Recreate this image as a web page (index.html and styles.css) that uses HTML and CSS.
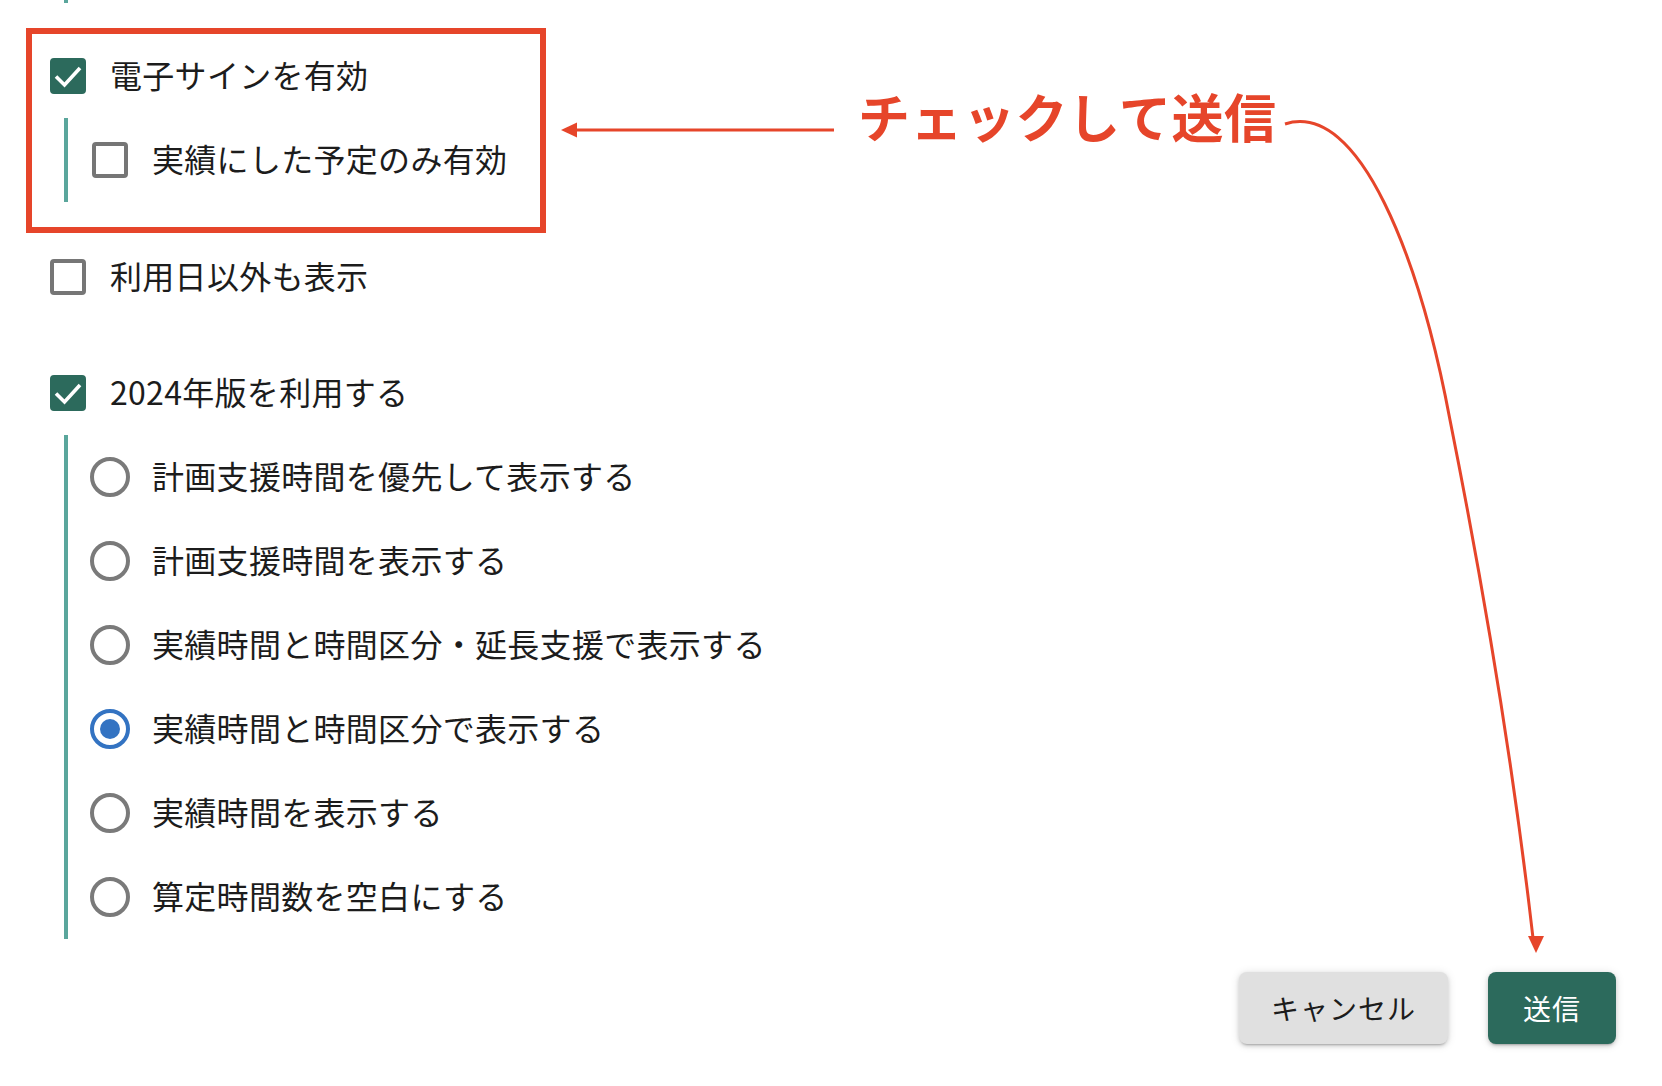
FILE: index.html
```html
<!DOCTYPE html>
<html lang="ja">
<head>
  <meta charset="UTF-8">
  <title>設定</title>
  <link rel="stylesheet" href="styles.css">
</head>
<body>

  <div class="settings">
    <div class="sub-group stub"></div>

    <div class="highlight">
      <label class="row">
        <span class="box checked">
          <svg viewBox="0 0 28 28"><path d="M2 14.5l8.5 8.5L26 6"/></svg>
        </span>
        <span class="label">電子サインを有効</span>
      </label>
      <div class="sub-group">
        <label class="row">
          <span class="box"></span>
          <span class="label">実績にした予定のみ有効</span>
        </label>
      </div>
    </div>

    <label class="row after-box">
      <span class="box"></span>
      <span class="label">利用日以外も表示</span>
    </label>

    <label class="row spaced">
      <span class="box checked">
        <svg viewBox="0 0 28 28"><path d="M2 14.5l8.5 8.5L26 6"/></svg>
      </span>
      <span class="label">2024年版を利用する</span>
    </label>

    <div class="sub-group">
      <label class="row"><span class="radio"></span><span class="label">計画支援時間を優先して表示する</span></label>
      <label class="row"><span class="radio"></span><span class="label">計画支援時間を表示する</span></label>
      <label class="row"><span class="radio"></span><span class="label">実績時間と時間区分・延長支援で表示する</span></label>
      <label class="row"><span class="radio on"></span><span class="label">実績時間と時間区分で表示する</span></label>
      <label class="row"><span class="radio"></span><span class="label">実績時間を表示する</span></label>
      <label class="row"><span class="radio"></span><span class="label">算定時間数を空白にする</span></label>
    </div>

    <div class="actions">
      <button class="btn cancel">キャンセル</button>
      <button class="btn submit">送信</button>
    </div>
  </div>

  <!-- annotation drawn over the screen -->
  <div class="note">チェックして送信</div>
  <svg class="arrows" viewBox="0 0 1662 1086">
    <path class="stroke" d="M574 130H834"/>
    <path class="head" d="M561 130l16-7.5v15z"/>
    <path class="stroke" d="M1285 124C1360 100 1420 260 1450 420C1490 620 1515 780 1533 938"/>
    <path class="head" d="M1536 953l-8-17h16z"/>
  </svg>

</body>
</html>
```

FILE: styles.css
```css
html {
  font-family: "Noto Sans CJK JP", "Noto Sans", sans-serif;
}

body {
  margin: 0;
  background: #fff;
  color: #1c1c1c;
  position: relative;
  height: 1086px;
  overflow: hidden;
}

.settings {
  display: flex;
  flex-direction: column;
  padding-left: 48px;
}

.row {
  display: flex;
  align-items: center;
  gap: 22px;
  height: 84px;
  font-size: 32px;
  cursor: pointer;
}

.label {
  line-height: 1;
  margin-top: -4px;
  letter-spacing: 0.3px;
}

/* checkbox */
.box {
  box-sizing: border-box;
  width: 36px;
  height: 36px;
  margin: 2px;
  border: 4px solid #767676;
  border-radius: 4px;
  display: flex;
  align-items: center;
  justify-content: center;
}

.box.checked {
  background: #2c6a5c;
  border-color: #2c6a5c;
}

.box svg {
  width: 28px;
  height: 28px;
  flex: none;
  fill: none;
  stroke: #fff;
  stroke-width: 3.6;
}

/* radio */
.radio {
  box-sizing: border-box;
  width: 40px;
  height: 40px;
  border: 4px solid #7a7a7a;
  border-radius: 50%;
  display: flex;
  align-items: center;
  justify-content: center;
}

.radio.on {
  border-color: #3373c2;
}

.radio.on::after {
  content: "";
  width: 20px;
  height: 20px;
  border-radius: 50%;
  background: #3373c2;
}

.sub-group {
  margin-left: 16px;
  padding-left: 22px;
  border-left: 4px solid #5aa69c;
}

.sub-group.stub {
  height: 3px;
}

.highlight {
  margin: 25px 0 0 -22px;
  padding: 0 0 25px 16px;
  width: 492px;
  border: 6px solid #e6452a;
}

.highlight .sub-group {
  margin-left: 16px;
}

.after-box {
  margin-top: 2px;
}

.spaced {
  margin-top: 32px;
}

/* buttons */
.actions {
  display: flex;
  justify-content: flex-end;
  gap: 40px;
  margin-top: 33px;
  padding-right: 46px;
}

.btn {
  font-family: "Noto Sans CJK JP", sans-serif;
  font-size: 28px;
  letter-spacing: 1px;
  height: 72px;
  min-width: 128px;
  padding: 0 32px;
  border: none;
  border-radius: 8px;
  cursor: pointer;
  box-shadow: 0 3px 2px -2px rgba(0,0,0,0.2), 0 2px 4px rgba(0,0,0,0.14), 0 1px 10px rgba(0,0,0,0.12);
}

.cancel {
  background: #e0e0e0;
  color: #1c1c1c;
}

.submit {
  background: #2c6a5c;
  color: #fff;
}

/* annotation */
.note {
  position: absolute;
  left: 858px;
  top: 88px;
  font-size: 52px;
  line-height: 56px;
  font-weight: bold;
  color: #e6452a;
  letter-spacing: 0.5px;
}

.arrows {
  position: absolute;
  left: 0;
  top: 0;
  width: 1662px;
  height: 1086px;
  pointer-events: none;
}

.arrows .stroke {
  fill: none;
  stroke: #e6452a;
  stroke-width: 3;
}

.arrows .head {
  fill: #e6452a;
}
```
